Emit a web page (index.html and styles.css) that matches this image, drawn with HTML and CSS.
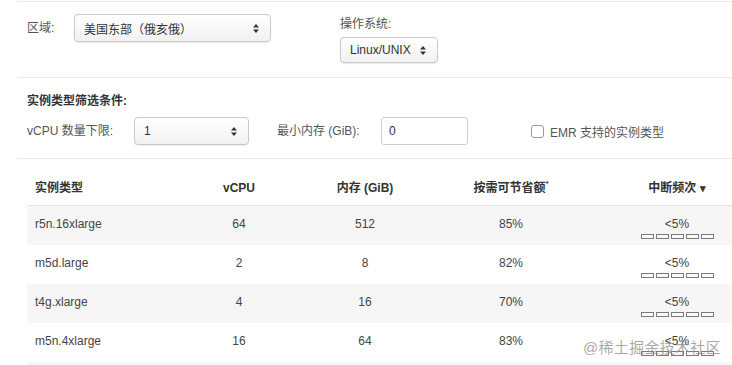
FILE: index.html
```html
<!DOCTYPE html>
<html lang="zh-CN">
<head>
    <meta charset="UTF-8">
    <meta name="viewport" content="width=device-width, initial-scale=1.0">
    <title>Spot 实例顾问</title>
    <link rel="stylesheet" href="styles.css">
</head>
<body>

<div class="filters">
    <!-- Region / OS -->
    <div class="section region-row">
        <div class="field">
            <span class="label region-label">区域:</span>
            <div class="select region-select">
                <span>美国东部（俄亥俄）</span>
                <svg class="arrows" width="6" height="9" viewBox="0 0 6 9"><path d="M3 0 L6 3.5 L0 3.5 Z M3 9 L6 5.5 L0 5.5 Z" fill="#333"/></svg>
            </div>
        </div>
        <div class="os-group">
            <div class="label os-label">操作系统:</div>
            <div class="select os-select">
                <span>Linux/UNIX</span>
                <svg class="arrows" width="6" height="9" viewBox="0 0 6 9"><path d="M3 0 L6 3.5 L0 3.5 Z M3 9 L6 5.5 L0 5.5 Z" fill="#333"/></svg>
            </div>
        </div>
    </div>

    <!-- Instance type filters -->
    <div class="section filter-section">
        <div class="filter-title">实例类型筛选条件:</div>
        <div class="filter-row">
            <span class="label vcpu-label">vCPU 数量下限:</span>
            <div class="select vcpu-select">
                <span>1</span>
                <svg class="arrows" width="6" height="9" viewBox="0 0 6 9"><path d="M3 0 L6 3.5 L0 3.5 Z M3 9 L6 5.5 L0 5.5 Z" fill="#333"/></svg>
            </div>
            <span class="label mem-label">最小内存 (GiB):</span>
            <div class="text-input">0</div>
            <label class="emr">
                <span class="checkbox"></span>
                <span>EMR 支持的实例类型</span>
            </label>
        </div>
    </div>
</div>

<!-- Results table -->
<div class="table">
    <div class="row head">
        <div class="cell first">实例类型</div>
        <div class="cell">vCPU</div>
        <div class="cell">内存 (GiB)</div>
        <div class="cell">按需可节省额<sup>*</sup></div>
        <div class="cell">中断频次 <span class="caret">&#9662;</span></div>
    </div>
    <div id="rows"></div>
</div>

<div class="watermark">@稀土掘金技术社区</div>

<script>
    const instances = [
        { type: "r5n.16xlarge", vcpu: 64, mem: 512, saving: "85%", freq: "<5%" },
        { type: "m5d.large", vcpu: 2, mem: 8, saving: "82%", freq: "<5%" },
        { type: "t4g.xlarge", vcpu: 4, mem: 16, saving: "70%", freq: "<5%" },
        { type: "m5n.4xlarge", vcpu: 16, mem: 64, saving: "83%", freq: "<5%" }
    ];

    const rows = document.getElementById("rows");
    instances.forEach(item => {
        const row = document.createElement("div");
        row.classList.add("row");
        row.innerHTML = `
            <div class="cell first">${item.type}</div>
            <div class="cell">${item.vcpu}</div>
            <div class="cell">${item.mem}</div>
            <div class="cell">${item.saving}</div>
            <div class="cell freq">${item.freq.replace("<", "&lt;")}<div class="bars"><i></i><i></i><i></i><i></i><i></i></div></div>
        `;
        rows.appendChild(row);
    });

    // next row, scrolled just below the frame
    const more = document.createElement("div");
    more.classList.add("row", "more");
    rows.appendChild(more);
</script>

</body>
</html>
```

FILE: styles.css
```css
body {
    margin: 0;
    font-family: "Liberation Sans", "Noto Sans CJK SC", sans-serif;
    font-size: 12px;
    color: #444;
    background-color: #fff;
    overflow: hidden;
}

.filters {
    margin: 1px 0 0 18px;
    border-top: 1px solid #e8e8e8;
}

.section {
    border-bottom: 1px solid #e8e8e8;
    padding-left: 9px;
}

.label {
    color: #555;
    line-height: 16px;
}

.region-row {
    display: flex;
    align-items: flex-start;
    padding-top: 12px;
    padding-bottom: 14px;
}

.field {
    display: flex;
    align-items: center;
}

.region-label {
    width: 47px;
}

.select {
    display: flex;
    align-items: center;
    justify-content: space-between;
    box-sizing: border-box;
    border: 1px solid #c9c9c9;
    border-radius: 4px;
    background: linear-gradient(#ffffff, #f1f1f1);
    box-shadow: 0 1px 1px rgba(0, 0, 0, 0.08);
    color: #333;
    padding: 0 11px 0 9px;
}

.region-select {
    width: 197px;
    height: 28px;
}

.os-group {
    margin-left: 69px;
}

.os-label {
    margin-top: 2px;
}

.os-select {
    width: 98px;
    height: 26px;
    margin-top: 5px;
}

.arrows {
    display: block;
}

.filter-section {
    padding-top: 15px;
    padding-bottom: 13px;
}

.filter-title {
    font-weight: bold;
    color: #333;
    line-height: 16px;
}

.filter-row {
    display: flex;
    align-items: center;
    margin-top: 8px;
}

.vcpu-label {
    width: 107px;
}

.vcpu-select {
    width: 115px;
    height: 28px;
    margin-right: 28px;
}

.mem-label {
    width: 104px;
}

.text-input {
    box-sizing: border-box;
    width: 87px;
    height: 28px;
    border: 1px solid #cfcfcf;
    border-radius: 3px;
    padding: 0 7px;
    line-height: 26px;
    color: #333;
}

.emr {
    display: flex;
    align-items: center;
    margin-left: 63px;
    color: #555;
}

.checkbox {
    width: 11px;
    height: 11px;
    border: 1px solid #9a9a9a;
    border-radius: 3px;
    margin-right: 6px;
}

.table {
    margin: 13px 0 0 27px;
}

.row {
    display: grid;
    grid-template-columns: 121px 182px 70px 222px 110px;
    height: 39px;
}

.row:nth-child(odd) {
    background-color: #f6f6f6;
}

.row.more {
    height: 3px;
}

.row.head {
    height: 33px;
    border-bottom: 1px solid #e6e6e6;
    background-color: #fff;
    font-weight: bold;
    color: #333;
    align-items: center;
}

.cell {
    text-align: center;
    white-space: nowrap;
    line-height: 17px;
}

.row:not(.head) .cell {
    padding-top: 10px;
}

.cell.first {
    text-align: left;
    padding-left: 8px;
}

.head sup {
    font-size: 8px;
    line-height: 0;
    vertical-align: 6px;
}

.caret {
    font-size: 11px;
}

.bars {
    display: flex;
    justify-content: center;
    gap: 2px;
    margin-top: 1px;
}

.bars i {
    box-sizing: border-box;
    width: 13px;
    height: 5px;
    border: 1px solid #7a7a7a;
    background-color: #fafafa;
}

.watermark {
    position: absolute;
    left: 583px;
    top: 336px;
    font-size: 15px;
    color: rgba(140, 140, 140, 0.75);
    letter-spacing: 0.3px;
}
```
